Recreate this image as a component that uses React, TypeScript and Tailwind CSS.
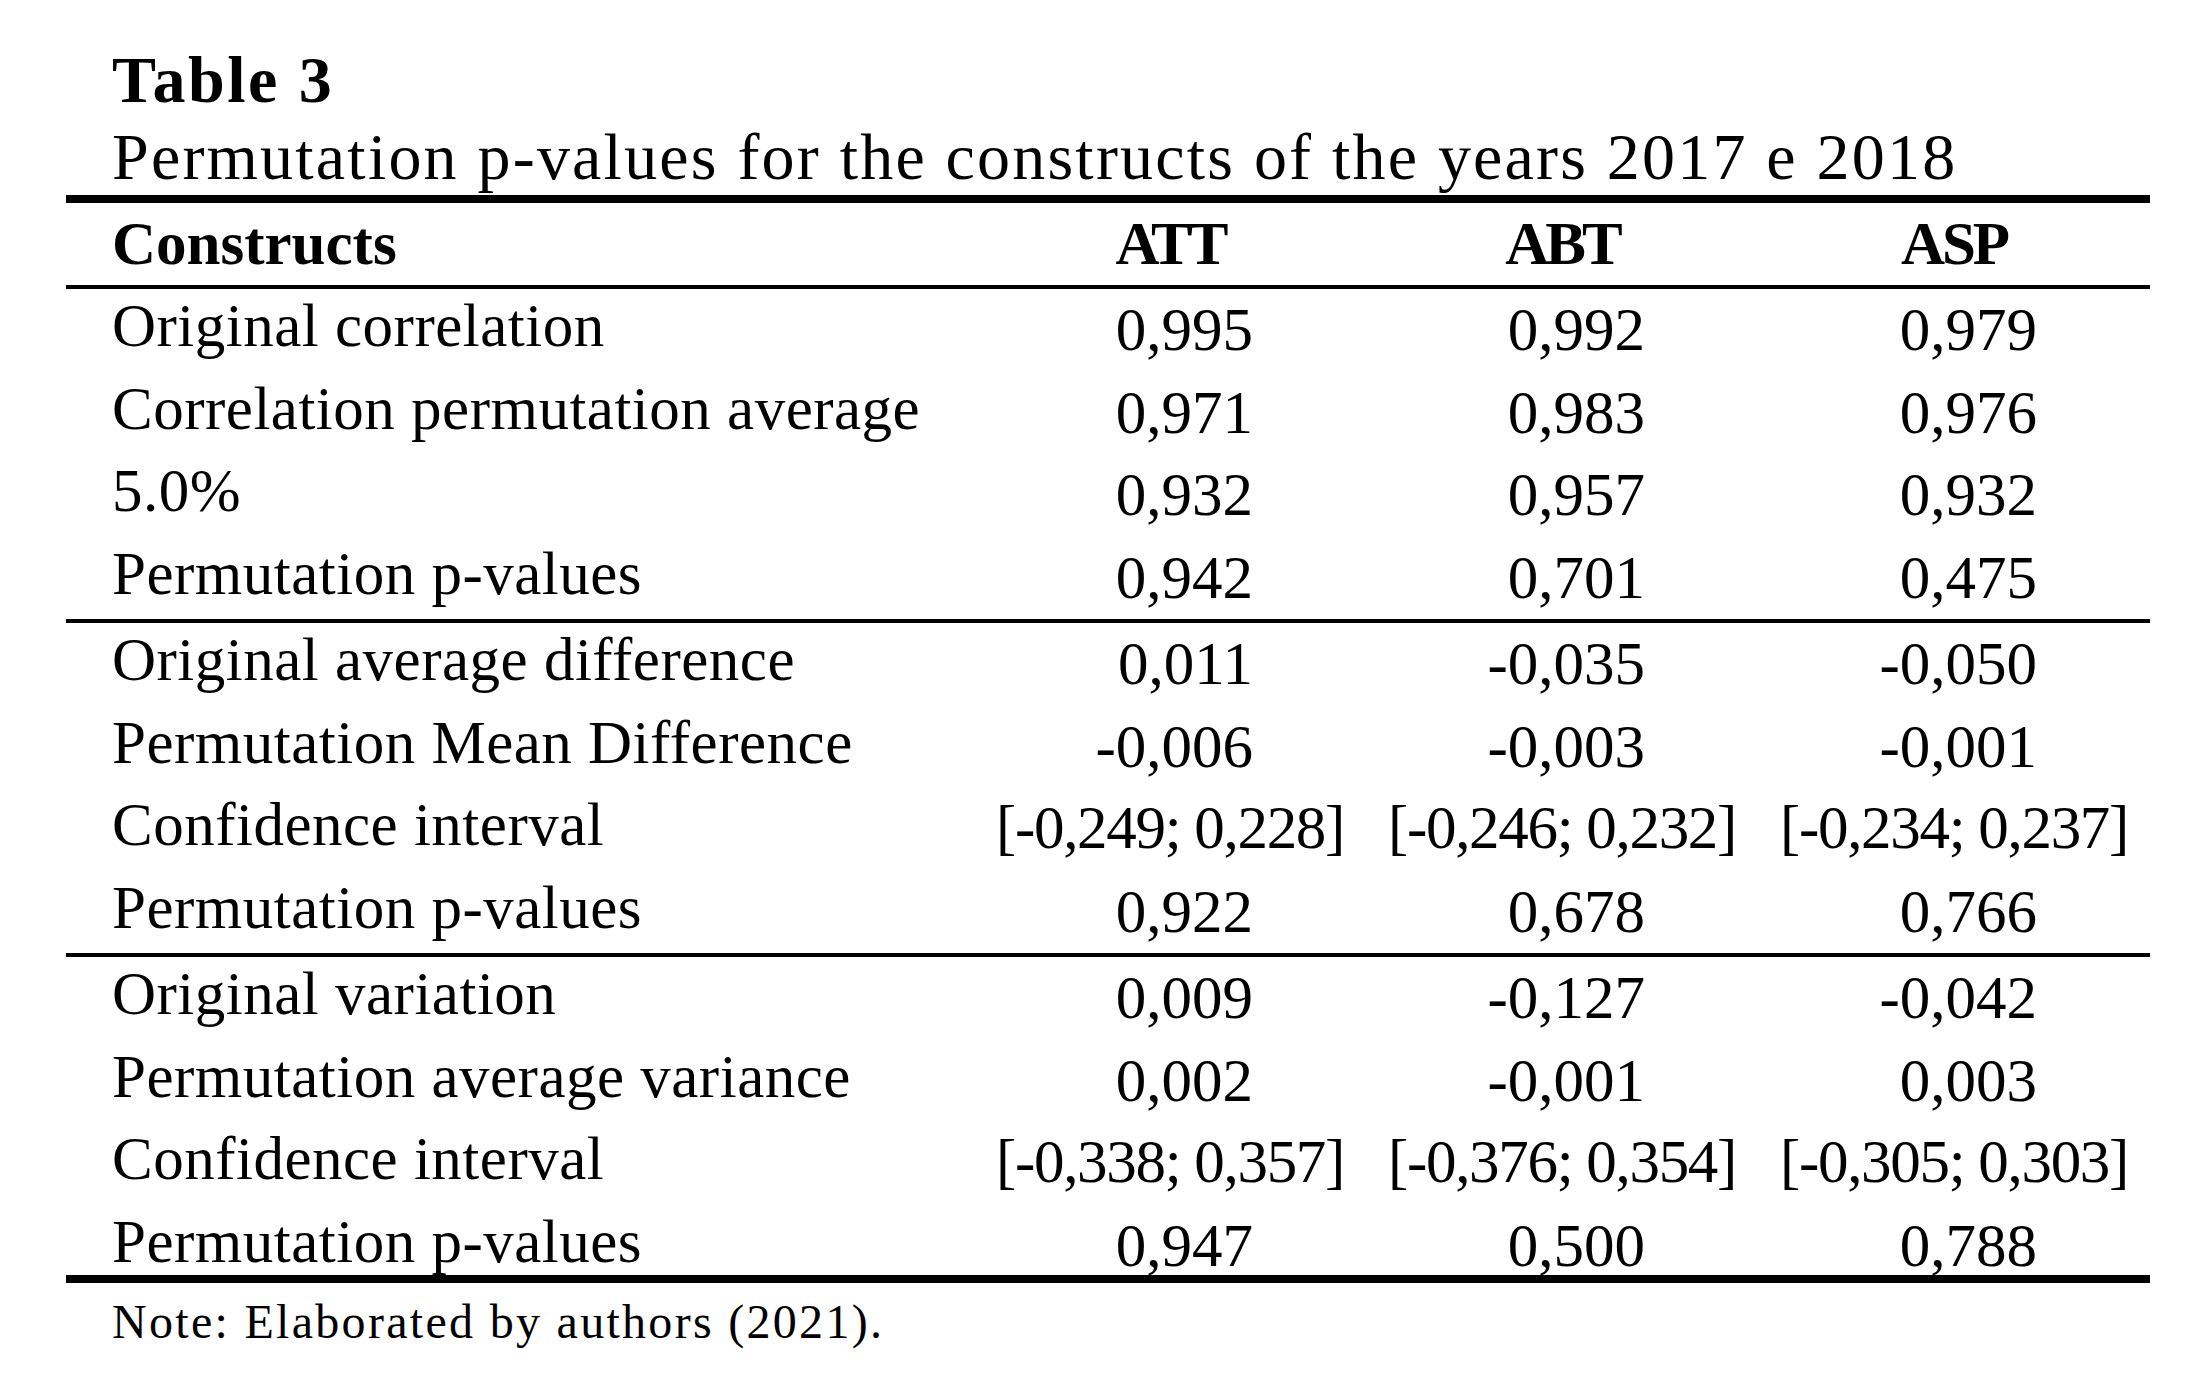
type Row = {
  label: string
  values: [string, string, string]
  interval?: boolean
}

const sections: Row[][] = [
  [
    { label: 'Original correlation', values: ['0,995', '0,992', '0,979'] },
    { label: 'Correlation permutation average', values: ['0,971', '0,983', '0,976'] },
    { label: '5.0%', values: ['0,932', '0,957', '0,932'] },
    { label: 'Permutation p-values', values: ['0,942', '0,701', '0,475'] },
  ],
  [
    { label: 'Original average difference', values: ['0,011', '-0,035', '-0,050'] },
    { label: 'Permutation Mean Difference', values: ['-0,006', '-0,003', '-0,001'] },
    {
      label: 'Confidence interval',
      values: ['[-0,249; 0,228]', '[-0,246; 0,232]', '[-0,234; 0,237]'],
      interval: true,
    },
    { label: 'Permutation p-values', values: ['0,922', '0,678', '0,766'] },
  ],
  [
    { label: 'Original variation', values: ['0,009', '-0,127', '-0,042'] },
    { label: 'Permutation average variance', values: ['0,002', '-0,001', '0,003'] },
    {
      label: 'Confidence interval',
      values: ['[-0,338; 0,357]', '[-0,376; 0,354]', '[-0,305; 0,303]'],
      interval: true,
    },
    { label: 'Permutation p-values', values: ['0,947', '0,500', '0,788'] },
  ],
]

function TableRow({ row, last }: { row: Row; last: boolean }) {
  return (
    <div
      className={`grid grid-cols-[908px_392px_392px_392px] leading-[73px] ${
        last ? 'h-[70.5px]' : 'h-[82.5px]'
      }`}
    >
      <div className="pl-[46px] tracking-[0.5px] whitespace-nowrap">{row.label}</div>
      {row.values.map((v, i) =>
        row.interval ? (
          <div key={i} className="pt-[3px] text-center tracking-[-1.3px] whitespace-nowrap">
            {v}
          </div>
        ) : (
          <div key={i} className="pt-[4px] pr-[113px] text-right whitespace-nowrap">
            {v}
          </div>
        )
      )}
    </div>
  )
}

export default function App() {
  return (
    <main className="min-h-screen w-[2193px] bg-white text-black font-['Liberation_Serif',serif]">
      <div className="pl-[112px]">
        <h1 className="pt-[42px] text-[66px] leading-[76px] font-bold tracking-[2.5px]">Table 3</h1>
        <p className="text-[66px] leading-[77px] tracking-[2.2px] whitespace-nowrap">
          Permutation p-values for the constructs of the years 2017 e 2018
        </p>
      </div>

      <div className="ml-[66px] w-[2084px] text-[61px]">
        <div className="h-[8px] bg-black" />
        <div className="grid grid-cols-[908px_392px_392px_392px] h-[82px] leading-[82px] font-bold">
          <div className="pl-[46px]">Constructs</div>
          <div className="text-center tracking-[-4px]">ATT</div>
          <div className="text-center tracking-[-4px]">ABT</div>
          <div className="text-center tracking-[-3px]">ASP</div>
        </div>
        <div className="h-[4px] bg-black" />

        {sections.map((section, si) => (
          <div key={si}>
            {section.map((row, ri) => (
              <TableRow
                key={ri}
                row={row}
                last={si === sections.length - 1 && ri === section.length - 1}
              />
            ))}
            {si < sections.length - 1 ? (
              <div className="h-[4px] bg-black" />
            ) : (
              <div className="h-[8px] bg-black" />
            )}
          </div>
        ))}
      </div>

      <p className="pl-[112px] text-[48px] leading-[77.5px] tracking-[2.3px] whitespace-nowrap">
        Note: Elaborated by authors (2021).
      </p>
    </main>
  )
}
